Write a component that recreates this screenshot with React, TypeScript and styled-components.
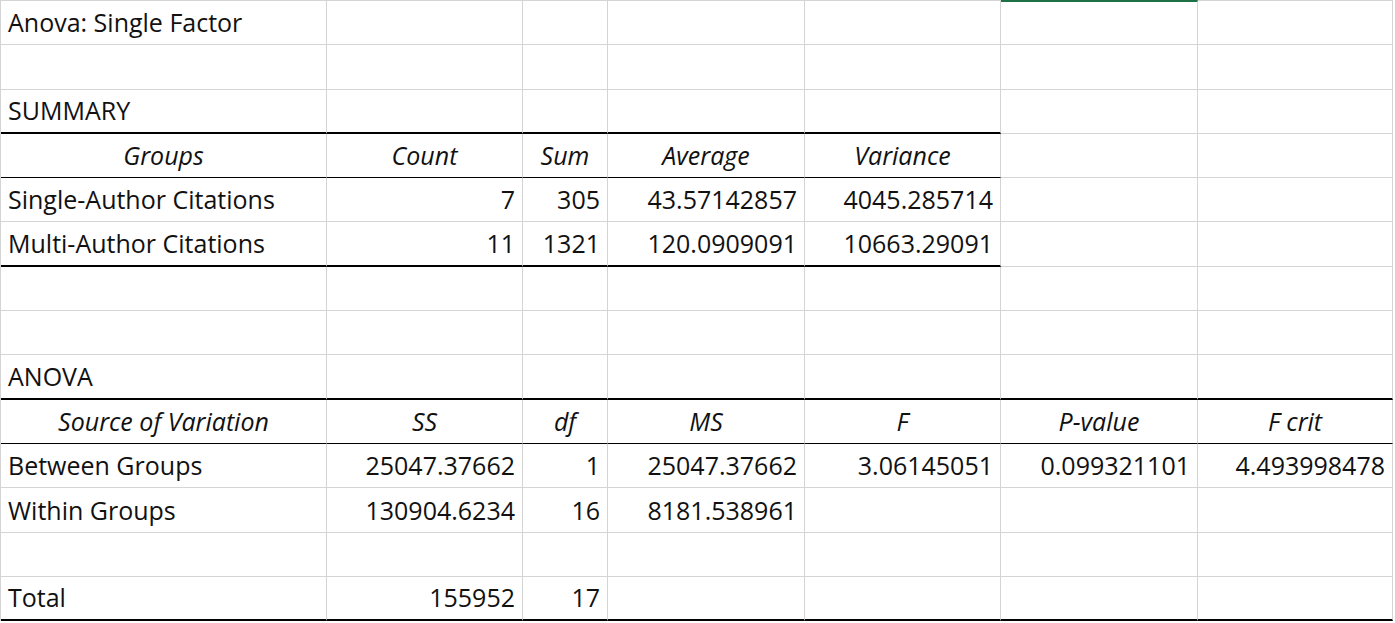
import React from "react";
import styled, { createGlobalStyle } from "styled-components";

const Global = createGlobalStyle`
  html, body { margin: 0; padding: 0; background: #fff; }
`;

const Sheet = styled.div`
  display: grid;
  grid-template-columns: 326px 196px 85px 197px 196px 197px 195px;
  grid-template-rows: repeat(14, 44.3px);
  border-top: 1px solid #d4d4d4;
  border-left: 1px solid #d4d4d4;
  width: 1392px;
  font-family: "Open Sans", "Liberation Sans", sans-serif;
  font-size: 25px;
  color: #111;
`;

type CellProps = { $align?: "left" | "right" | "center"; $italic?: boolean; $bottom?: "thin" | "thick"; $green?: boolean };

const Cell = styled.div<CellProps>`
  box-sizing: border-box;
  display: flex;
  align-items: flex-end;
  padding: 0 7px 5px 7px;
  justify-content: ${(p) => (p.$align === "right" ? "flex-end" : p.$align === "center" ? "center" : "flex-start")};
  font-style: ${(p) => (p.$italic ? "italic" : "normal")};
  border-right: 1px solid #d4d4d4;
  border-bottom: ${(p) => (p.$bottom === "thick" ? "2.5px solid #000" : p.$bottom === "thin" ? "1.5px solid #000" : "1px solid #d4d4d4")};
  ${(p) => (p.$green ? "border-top: 2px solid #1e7145; margin-top:-1px;" : "")}
  white-space: nowrap;
  overflow: visible;
`;

type Row = { cells: string[]; italic?: boolean; center?: boolean; bottom?: "thin" | "thick"; span?: number };

const rows: Row[] = [
  { cells: ["Anova: Single Factor"] },
  { cells: [] },
  { cells: ["SUMMARY"], bottom: "thick", span: 5 },
  { cells: ["Groups", "Count", "Sum", "Average", "Variance"], italic: true, center: true, bottom: "thin", span: 5 },
  { cells: ["Single-Author Citations", "7", "305", "43.57142857", "4045.285714"] },
  { cells: ["Multi-Author Citations", "11", "1321", "120.0909091", "10663.29091"], bottom: "thick", span: 5 },
  { cells: [] },
  { cells: [] },
  { cells: ["ANOVA"], bottom: "thick", span: 7 },
  { cells: ["Source of Variation", "SS", "df", "MS", "F", "P-value", "F crit"], italic: true, center: true, bottom: "thin", span: 7 },
  { cells: ["Between Groups", "25047.37662", "1", "25047.37662", "3.06145051", "0.099321101", "4.493998478"] },
  { cells: ["Within Groups", "130904.6234", "16", "8181.538961"] },
  { cells: [] },
  { cells: ["Total", "155952", "17"], bottom: "thick", span: 7 },
];

export default function App() {
  return (
    <>
      <Global />
      <Sheet>
        {rows.map((r, ri) =>
          Array.from({ length: 7 }).map((_, ci) => {
            const text = r.cells[ci] ?? "";
            const align = r.center ? "center" : ci === 0 ? "left" : "right";
            const bottom = r.bottom && ci < (r.span ?? 7) ? r.bottom : undefined;
            return (
              <Cell key={`${ri}-${ci}`} $align={align} $italic={r.italic} $bottom={bottom} $green={ri === 0 && ci === 5}>
                {text}
              </Cell>
            );
          })
        )}
      </Sheet>
    </>
  );
}
